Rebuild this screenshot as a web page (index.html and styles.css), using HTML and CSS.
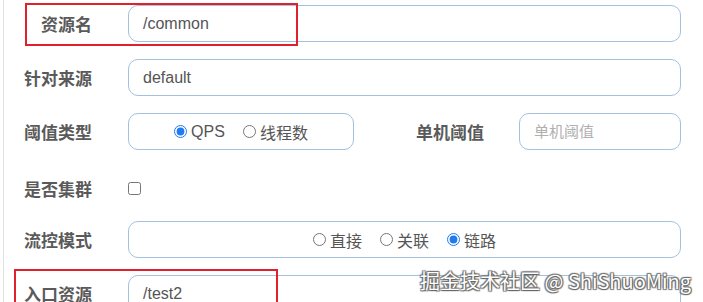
FILE: index.html
```html
<!DOCTYPE html>
<html lang="zh-CN">

<head>
  <meta charset="UTF-8">
  <meta name="viewport" content="width=device-width, initial-scale=1.0">
  <title>新增流控规则</title>
  <link rel="stylesheet" href="styles.css">
</head>

<body>
  <form class="panel">
    <div class="row">
      <label class="label" for="resource">资源名</label>
      <input class="field" id="resource" type="text" value="/common">
    </div>

    <div class="row">
      <label class="label" for="limit-app">针对来源</label>
      <input class="field" id="limit-app" type="text" value="default">
    </div>

    <div class="row">
      <span class="label">阈值类型</span>
      <div class="field choices choices-narrow">
        <label class="choice"><input type="radio" name="grade" checked>QPS</label>
        <label class="choice"><input type="radio" name="grade">线程数</label>
      </div>
      <label class="label label-side" for="count">单机阈值</label>
      <input class="field field-small" id="count" type="text" placeholder="单机阈值">
    </div>

    <div class="row row-check">
      <span class="label">是否集群</span>
      <input class="check" type="checkbox">
    </div>

    <div class="row">
      <span class="label">流控模式</span>
      <div class="field choices">
        <label class="choice"><input type="radio" name="strategy">直接</label>
        <label class="choice"><input type="radio" name="strategy">关联</label>
        <label class="choice"><input type="radio" name="strategy" checked>链路</label>
      </div>
    </div>

    <div class="row">
      <label class="label" for="ref">入口资源</label>
      <input class="field" id="ref" type="text" value="/test2">
    </div>

    <div class="mark mark-top"></div>
    <div class="mark mark-bottom"></div>
  </form>

  <div class="watermark">掘金技术社区 @ ShiShuoMing</div>
</body>

</html>
```

FILE: styles.css
```css
* {
  margin: 0;
  box-sizing: border-box;
}

body {
  font-family: "Liberation Sans", "Noto Sans CJK SC", sans-serif;
  background: #fff;
  color: #555;
  width: 703px;
  height: 302px;
  overflow: hidden;
  position: relative;
}

.panel {
  position: relative;
  margin-left: 3px;
  height: 302px;
  padding: 5px 22px 0 0;
  border-left: 1px solid #e2e2e2;
}

.row {
  display: flex;
  align-items: center;
  height: 37px;
  margin-bottom: 17px;
}

.row-check {
  padding-top: 5px;
}

.label {
  flex: none;
  width: 88px;
  margin-right: 36px;
  text-align: right;
  font-family: "Noto Sans CJK SC", sans-serif;
  font-size: 17px;
  font-weight: 700;
  color: #5a5a5a;
}

.label-side {
  flex: 1;
  width: auto;
  margin-right: 35px;
}

.field {
  flex: 1;
  height: 37px;
  padding: 0 14px;
  border: 1.5px solid #a3c0de;
  border-radius: 10px;
  font-family: "Liberation Sans", "Noto Sans CJK SC", sans-serif;
  font-size: 16px;
  color: #555;
  background: #fff;
  outline: none;
}

.field::placeholder {
  color: #b0b0b0;
  font-family: "Noto Sans CJK SC", sans-serif;
  font-size: 15px;
}

.field-small {
  flex: none;
  width: 162px;
}

.choices {
  display: flex;
  justify-content: center;
  align-items: center;
  gap: 18px;
  padding: 0;
}

.choices-narrow {
  flex: none;
  width: 226px;
}

.choice {
  display: flex;
  align-items: center;
  gap: 4px;
  font-family: "Liberation Sans", "Noto Sans CJK SC", sans-serif;
  font-size: 16px;
  color: #555;
}

.choice input {
  margin: 0;
  width: 13px;
  height: 13px;
  accent-color: #1f7bf2;
}

.check {
  margin: 0;
  width: 13px;
  height: 13px;
}

.mark {
  position: absolute;
  border: 2px solid #e0202a;
}

.mark-top {
  left: 21px;
  top: 3px;
  width: 273px;
  height: 43px;
}

.mark-bottom {
  left: 10px;
  top: 269px;
  width: 264px;
  height: 50px;
}

.watermark {
  position: absolute;
  left: 420px;
  top: 266px;
  font-family: "Noto Sans CJK SC", sans-serif;
  font-size: 20px;
  color: #fff;
  text-shadow: 0 0 1px #555, 1px 1px 1px #666, -1px -1px 1px #777, 1px -1px 1px #777, -1px 1px 1px #777;
  white-space: nowrap;
}
```
